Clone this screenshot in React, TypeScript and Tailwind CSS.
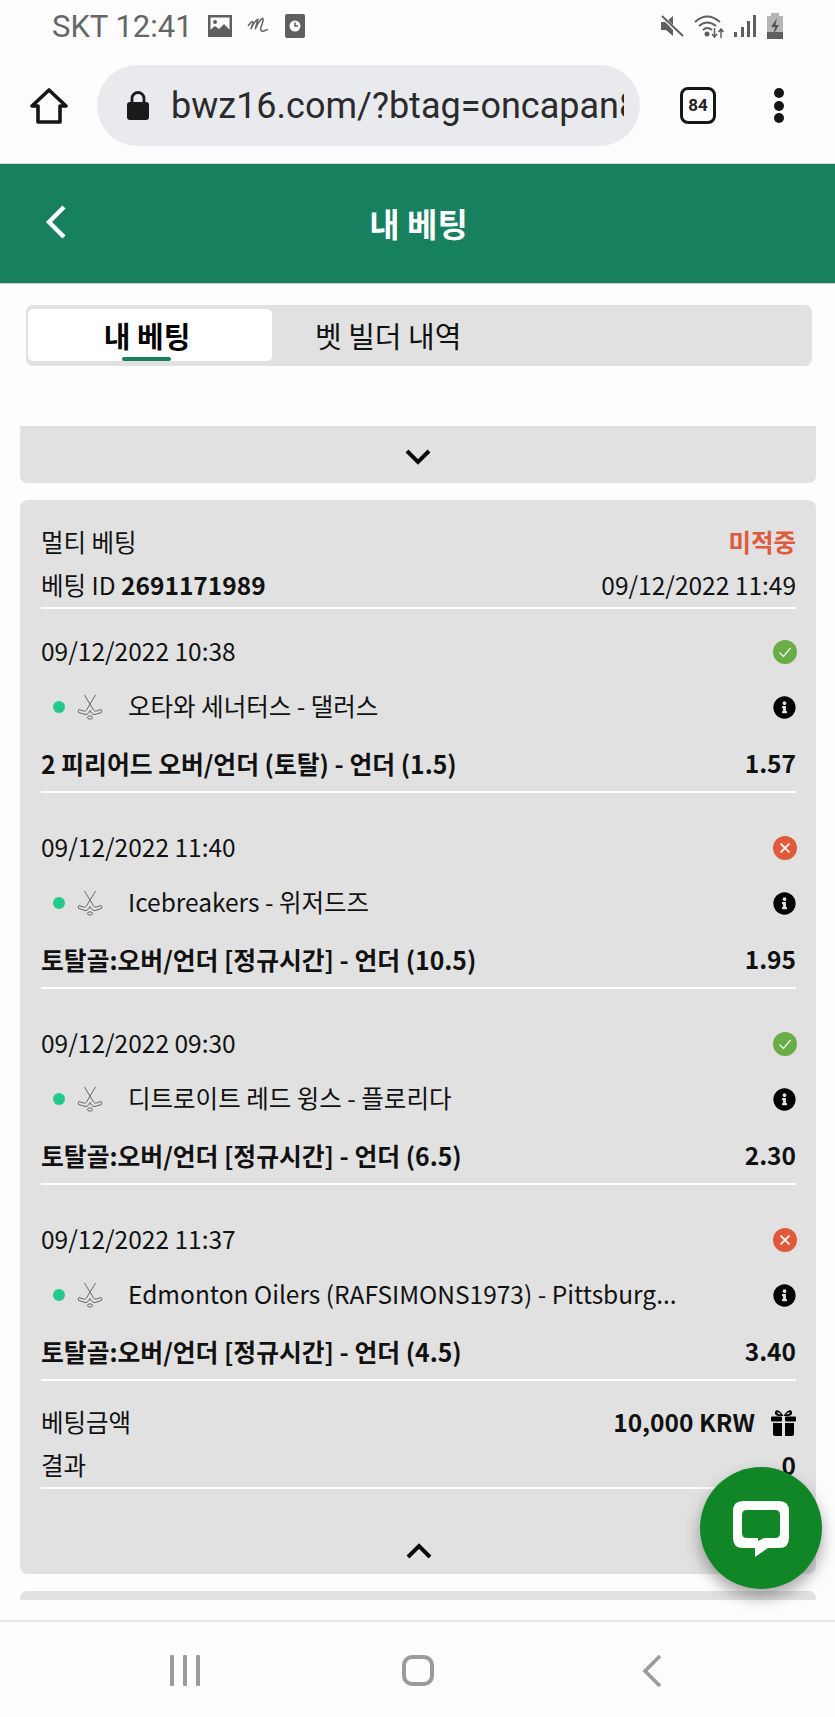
import React from "react";
import { FaInfoCircle } from "react-icons/fa";

const Chevron = ({ up }: { up?: boolean }) => (
  <svg width="26" height="16" viewBox="0 0 26 16" className="block">
    <path d={up ? "M2 14 L13 3 L24 14" : "M2 2 L13 13 L24 2"} fill="none" stroke="#0a0a0a" strokeWidth="4" />
  </svg>
);

const Sticks = () => (
  <svg width="26" height="26" viewBox="0 0 26 26" className="block" fill="none" stroke="#666" strokeWidth="1">
    <path d="M7.5 1 L16.5 16 Q17.5 17.5 19.5 17 L24 15.5 Q25.5 17 24.5 18.5 L18 20.5 Q15.5 20.5 14.5 19 L13 16.5" />
    <path d="M18.5 1 L9.5 16 Q8.5 17.5 6.5 17 L2 15.5 Q0.5 17 1.5 18.5 L8 20.5 Q10.5 20.5 11.5 19 L13 16.5" />
    <ellipse cx="13" cy="23.5" rx="2.6" ry="1.6" />
  </svg>
);

const Gift = () => (
  <svg width="25" height="26" viewBox="0 0 25 26" className="ml-[16px] block" fill="#000">
    <path d="M12.5 6 C9 0 5 -1 4 2 C3 5 7 6.5 12.5 6 C18 6.5 22 5 21 2 C20 -1 16 0 12.5 6 Z M6.5 2.5 C6 3.5 8 4.5 10 4.5 C9 3 7 1.5 6.5 2.5 Z M18.5 2.5 C18 1.5 16 3 15 4.5 C17 4.5 19 3.5 18.5 2.5 Z" fillRule="evenodd" />
    <rect x="0" y="6.5" width="11" height="5" rx="1" />
    <rect x="14" y="6.5" width="11" height="5" rx="1" />
    <path d="M2 13 H11 V26 H4 Q2 26 2 24 Z M14 13 H23 V24 Q23 26 21 26 H14 Z" />
  </svg>
);

const Status = ({ ok }: { ok: boolean }) => (
  <svg width="24" height="24" viewBox="0 0 24 24" className="block">
    <circle cx="12" cy="12" r="12" fill={ok ? "#6aad48" : "#e1593b"} />
    {ok ? (
      <path d="M6.5 12.5 L10.5 16.5 L17.5 8" fill="none" stroke="#e8f3e2" strokeWidth="1.4" />
    ) : (
      <path d="M7.5 7.5 L16.5 16.5 M16.5 7.5 L7.5 16.5" fill="none" stroke="#fbe9e4" strokeWidth="1.8" />
    )}
  </svg>
);

const selections = [
  { date: "09/12/2022 10:38", ok: true, match: "오타와 세너터스 - 댈러스", market: "2 피리어드 오버/언더 (토탈) - 언더 (1.5)", odds: "1.57" },
  { date: "09/12/2022 11:40", ok: false, match: "Icebreakers - 위저드즈", market: "토탈골:오버/언더 [정규시간] - 언더 (10.5)", odds: "1.95" },
  { date: "09/12/2022 09:30", ok: true, match: "디트로이트 레드 윙스 - 플로리다", market: "토탈골:오버/언더 [정규시간] - 언더 (6.5)", odds: "2.30" },
  { date: "09/12/2022 11:37", ok: false, match: "Edmonton Oilers (RAFSIMONS1973) - Pittsburg...", market: "토탈골:오버/언더 [정규시간] - 언더 (4.5)", odds: "3.40" },
];

export default function App() {
  return (
    <div className="relative flex h-[1717px] w-[835px] flex-col overflow-hidden bg-[#fdfdfd] font-['Noto_Sans_CJK_KR','Noto_Sans',sans-serif] text-[#111]">
      {/* status bar */}
      <div className="flex h-[50px] shrink-0 items-center justify-between pl-[52px] pr-[52px] pt-[2px] font-['Roboto',sans-serif] text-[31px] text-[#666]">
        <div className="flex items-center">
          <span className="leading-none">SKT 12:41</span>
          <svg width="24" height="24" viewBox="0 0 24 24" className="ml-[15px]">
            <rect x="0" y="1" width="24" height="22" fill="#5f5f5f" />
            <rect x="2.5" y="3.5" width="19" height="17" fill="#fdfdfd" />
            <circle cx="7" cy="8" r="2" fill="#5f5f5f" />
            <path d="M2 21 L2 16 L7 12 L11 15 L16 10 L22 16 L22 21 Z" fill="#5f5f5f" />
          </svg>
          <svg width="24" height="24" viewBox="0 0 22 22" className="ml-[15px]" fill="none" stroke="#666" strokeWidth="1.4">
            <path d="M1 11 Q5 5 5.5 8 L3.5 14 Q7 6 10 5 L7.5 14 Q11 6 14 4 Q16 4 12.5 13 Q12 18 19 14" />
          </svg>
          <svg width="20" height="24" viewBox="0 0 20 24" className="ml-[14px]">
            <rect x="0" y="0" width="20" height="24" rx="2" fill="#5f5f5f" />
            <circle cx="10" cy="12" r="5.5" fill="#fdfdfd" />
            <path d="M10 8.5 V12 H13" fill="none" stroke="#5f5f5f" strokeWidth="1.5" />
          </svg>
        </div>
        <div className="flex items-center">
          <svg width="24" height="24" viewBox="0 0 24 24">
            <path d="M1 8 H6 L13 2 V22 L6 16 H1 Z" fill="#5f5f5f" />
            <path d="M3 3 L22 23" stroke="#fdfdfd" strokeWidth="3.5" />
            <path d="M2 2 L23 22" stroke="#5f5f5f" strokeWidth="2" />
          </svg>
          <svg width="32" height="25" viewBox="0 0 32 25" className="ml-[10px]" fill="none" stroke="#5f5f5f" strokeWidth="2">
            <path d="M1 8 Q13 -3 26 8" />
            <path d="M5 12 Q13 5 22 12" />
            <path d="M9 16 Q13 12 18 16" />
            <circle cx="13" cy="20" r="1.5" fill="#5f5f5f" />
            <path d="M20.5 14 V23 M18 20 L20.5 23 L23 20 M27 24 V15 M24.5 18 L27 15 L29.5 18" strokeWidth="1.5" />
          </svg>
          <svg width="22" height="24" viewBox="0 0 22 24" className="ml-[8px]" fill="#5f5f5f">
            <rect x="0" y="18" width="3" height="5" />
            <rect x="7" y="13" width="3" height="10" />
            <rect x="13" y="7" width="3" height="16" />
            <rect x="19" y="1" width="3" height="22" />
          </svg>
          <svg width="16" height="26" viewBox="0 0 16 26" className="ml-[11px]">
            <rect x="4" y="0" width="8" height="3" fill="#b5b5b5" />
            <rect x="0" y="3" width="16" height="23" fill="#b5b5b5" />
            <rect x="0" y="19" width="16" height="7" fill="#5f5f5f" />
            <path d="M10 5 L4 14 H8 L6 22 L12 12 H8.5 Z" fill="#555" />
          </svg>
        </div>
      </div>

      {/* browser bar */}
      <div className="flex h-[114px] shrink-0 items-center border-b border-[#dcdcdc] pb-[2px]">
        <svg width="40" height="38" viewBox="0 0 40 38" className="ml-[29px]" fill="none" stroke="#161616" strokeWidth="3.6" strokeLinejoin="round">
          <path d="M20 3 L37 19 H31 V35 H9 V19 H3 Z" />
        </svg>
        <div className="ml-[28px] flex h-[81px] w-[543px] items-center overflow-hidden rounded-full bg-[#e9eaee] pl-[30px]">
          <svg width="22" height="29" viewBox="0 0 22 29" className="shrink-0">
            <rect x="0" y="11" width="22" height="18" rx="3" fill="#1b1b1b" />
            <path d="M5 12 V7.5 A6 6 0 0 1 17 7.5 V12" fill="none" stroke="#1b1b1b" strokeWidth="2.8" />
          </svg>
          <div className="ml-[22px] w-[453px] shrink-0 overflow-hidden whitespace-nowrap font-['Roboto',sans-serif] text-[36px] leading-[48px] text-[#2b2b2b]">
            bwz16.com/?btag=oncapan8
          </div>
        </div>
        <div className="ml-[40px] flex h-[37px] w-[36px] items-center justify-center rounded-[8px] border-[3.5px] border-[#161616] font-['Roboto',sans-serif] text-[17px] font-bold text-[#222]">
          84
        </div>
        <div className="ml-[58px] flex flex-col gap-[2.5px]">
          <span className="h-[10px] w-[10px] rounded-full bg-[#161616]" />
          <span className="h-[10px] w-[10px] rounded-full bg-[#161616]" />
          <span className="h-[10px] w-[10px] rounded-full bg-[#161616]" />
        </div>
      </div>

      {/* header */}
      <div className="relative flex h-[120px] shrink-0 items-center justify-center border-b border-[#cfcfcf] bg-[#16805f] pb-[2px] pl-[2px] text-[33px] leading-[44px] font-bold text-white">
        <svg width="22" height="34" viewBox="0 0 22 34" className="absolute left-[45px] top-[41px]">
          <path d="M19 2 L4 17 L19 32" fill="none" stroke="#fff" strokeWidth="4.4" />
        </svg>
        내 베팅
      </div>

      {/* tabs */}
      <div className="ml-[26px] mr-[23px] mt-[21px] flex h-[61px] shrink-0 items-start rounded-[7px] bg-[#e1e1e1] pl-[2px] pt-[4px]">
        <div className="relative flex h-[52px] w-[244px] items-center justify-center rounded-[5px] bg-white pr-[6px] text-[29px] leading-[40px] font-bold text-black">
          내 베팅
          <span className="absolute bottom-0 left-[94px] h-[4px] w-[49px] rounded-[2px] bg-[#16805f]" />
        </div>
        <div className="ml-[43px] flex h-[52px] items-center text-[29px] leading-[40px] text-[#111]">벳 빌더 내역</div>
      </div>

      {/* collapsed card */}
      <div className="ml-[20px] mr-[19px] mt-[60px] flex h-[57px] shrink-0 items-center justify-center rounded-b-[7px] bg-[#e1e1e1] pt-[5px]">
        <Chevron />
      </div>

      {/* main card */}
      <div className="ml-[20px] mr-[19px] mt-[17px] h-[1074px] shrink-0 rounded-[8px] bg-[#e1e1e1] pl-[21px] pr-[20px] pt-[21px] text-[24.5px] leading-[34px]">
        <div className="flex h-[44px] items-center justify-between">
          <span className="pb-[2px]">멀티 베팅</span>
          <span className="pb-[2px] font-bold text-[#e05a3c]">미적중</span>
        </div>
        <div className="flex h-[44px] items-center justify-between border-b-2 border-white">
          <span className="pb-[2px]">
            베팅 ID <b className="font-bold">2691171989</b>
          </span>
          <span className="pb-[2px]">09/12/2022 11:49</span>
        </div>

        {selections.map((s, i) => (
          <div key={i} className={i === 0 ? "h-[184px] border-b-2 border-white pt-[21px]" : "mt-[12px] h-[184px] border-b-2 border-white pt-[21px]"}>
            <div className="flex h-[44px] items-center justify-between">
              <span className="pb-[2px]">{s.date}</span>
              <span className="-mr-[1px]">
                <Status ok={s.ok} />
              </span>
            </div>
            <div className="mt-[11px] flex h-[44px] items-center">
              <span className="ml-[12px] h-[12px] w-[12px] rounded-full bg-[#22c98b]" />
              <span className="ml-[12px]">
                <Sticks />
              </span>
              <span className="ml-[25px] flex-1 whitespace-nowrap pb-[2px]">{s.match}</span>
              <FaInfoCircle className="h-[23px] w-[23px] text-black" />
            </div>
            <div className="mt-[14px] flex h-[44px] items-center justify-between font-bold">
              <span className="pb-[4px] text-[24.8px]">{s.market}</span>
              <span className="pb-[4px]">{s.odds}</span>
            </div>
          </div>
        ))}

        <div className="mt-[20px] flex h-[44px] items-center justify-between">
          <span className="pb-[2px]">베팅금액</span>
          <span className="flex items-center font-bold">
            <span className="pb-[2px]">10,000 KRW</span>
            <Gift />
          </span>
        </div>
        <div className="flex h-[44px] items-center justify-between border-b-2 border-white">
          <span className="pb-[2px]">결과</span>
          <span className="pb-[2px] font-bold">0</span>
        </div>
        <div className="flex justify-center pt-[54px]">
          <Chevron up />
        </div>
      </div>

      {/* next card peeking */}
      <div className="ml-[20px] mr-[19px] mt-[17px] h-[9px] shrink-0 rounded-t-[7px] bg-[#e1e1e1]" />

      {/* nav bar */}
      <div className="mt-[20px] flex flex-1 items-start border-t-2 border-[#e6e6e6] bg-[#fdfdfd] pt-[33px]">
        <div className="ml-[170px] flex h-[31px] gap-[9px]">
          <span className="w-[4px] rounded-[1px] bg-[#9b9b9b]" />
          <span className="w-[4px] rounded-[1px] bg-[#9b9b9b]" />
          <span className="w-[4px] rounded-[1px] bg-[#9b9b9b]" />
        </div>
        <div className="ml-[202px] h-[31px] w-[32px] rounded-[10px] border-[4px] border-[#9b9b9b]" />
        <svg width="20" height="32" viewBox="0 0 20 32" className="ml-[208px]">
          <path d="M18 1 L3 16 L18 31" fill="none" stroke="#9b9b9b" strokeWidth="3.6" />
        </svg>
      </div>

      {/* floating chat */}
      <div className="absolute left-[700px] top-[1467px] flex h-[122px] w-[122px] items-center justify-center rounded-full bg-[#118626] shadow-[0_8px_16px_rgba(0,0,0,0.35)]">
        <svg width="58" height="58" viewBox="0 0 58 58" className="mt-[2px]">
          <path
            fillRule="evenodd"
            fill="#fff"
            d="M11 1 H47 Q57 1 57 11 V38 Q57 48 47 48 H36 L23 57 V48 H11 Q1 48 1 38 V11 Q1 1 11 1 Z M15 10 Q10 10 10 15 V33 Q10 38 15 38 H26 V41 L32 38 H43 Q48 38 48 33 V15 Q48 10 43 10 Z"
          />
        </svg>
      </div>
    </div>
  );
}
